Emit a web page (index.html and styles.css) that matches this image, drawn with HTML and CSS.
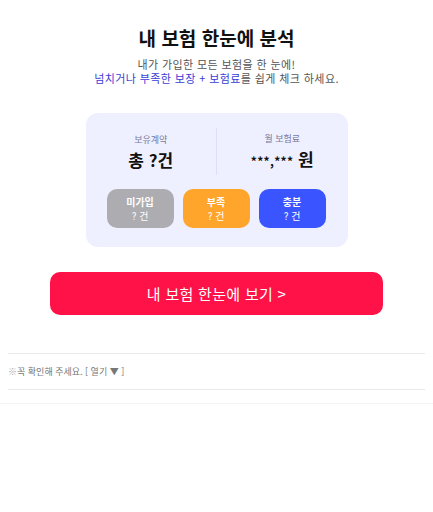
FILE: index.html
```html
<!DOCTYPE html>
<html lang="ko">
<head>
<meta charset="utf-8">
<link rel="stylesheet" href="styles.css">
</head>
<body>
<div class="page">
  <section class="hero">
    <h1 class="title">내 보험 한눈에 분석</h1>
    <p class="sub">내가 가입한 모든 보험을 한 눈에!<br><span class="blue">넘치거나 부족한 보장 + 보험료</span>를 쉽게 체크 하세요.</p>
    <div class="card">
      <div class="stats">
        <div class="stat">
          <div class="label">보유계약</div>
          <div class="value">총 ?건</div>
        </div>
        <div class="divider"></div>
        <div class="stat">
          <div class="label">월 보험료</div>
          <div class="value"><span class="stars">***,***</span> 원</div>
        </div>
      </div>
      <div class="chips">
        <div class="chip gray"><b>미가입</b><span>? 건</span></div>
        <div class="chip orange"><b>부족</b><span>? 건</span></div>
        <div class="chip blue-bg"><b>충분</b><span>? 건</span></div>
      </div>
    </div>
    <button class="cta">내 보험 한눈에 보기 &gt;</button>
  </section>
  <div class="notice">
    <span class="mark">※</span>꼭 확인해 주세요. [ 열기 ▼ ]
  </div>
</div>
<div class="foot-line"></div>
</body>
</html>
```
FILE: styles.css
```css
html, body {
  margin: 0;
  padding: 0;
  background: #fff;
}
body {
  font-family: "Noto Sans CJK KR", "Noto Sans", sans-serif;
  color: #111;
}
.page {
  padding: 0 8px;
}
.hero {
  display: flex;
  flex-direction: column;
  align-items: center;
  padding-top: 24px;
}
.title {
  margin: 0;
  font-size: 19px;
  font-weight: 700;
  line-height: 28px;
  color: #111;
}
.sub {
  margin: 5px 0 0;
  font-size: 11px;
  line-height: 14px;
  letter-spacing: 0.4px;
  color: #555;
  text-align: center;
}
.blue { color: #3b3bd6; }
.card {
  margin-top: 28px;
  width: 262px;
  height: 134px;
  box-sizing: border-box;
  background: #eff0ff;
  border-radius: 12px;
  padding-top: 15px;
}
.stats {
  display: flex;
  align-items: center;
  height: 47px;
}
.stat {
  flex: 1;
  display: flex;
  flex-direction: column;
  align-items: center;
}
.divider {
  width: 1px;
  align-self: stretch;
  background: #dcdff8;
}
.label {
  font-size: 9px;
  line-height: 14px;
  color: #767a9e;
}
.value {
  margin-top: 2px;
  font-size: 17px;
  line-height: 22px;
  font-weight: 700;
  color: #111;
}
.stars {
  font-size: 12px;
  letter-spacing: 0.3px;
}
.chips {
  display: flex;
  gap: 9px;
  margin-top: 14px;
  padding: 0 21px;
}
.chip {
  width: 67px;
  height: 39px;
  border-radius: 10px;
  display: flex;
  flex-direction: column;
  align-items: center;
  justify-content: center;
  color: #fff;
  font-size: 10px;
  line-height: 14px;
}
.chip b { font-weight: 700; }
.gray { background: #adadb1; }
.orange { background: #ffa52c; }
.blue-bg { background: #3a55ff; }
.cta {
  margin-top: 25px;
  width: 333px;
  height: 43px;
  border: none;
  border-radius: 10px;
  background: #ff1247;
  color: #fff;
  font-family: inherit;
  font-size: 15px;
  font-weight: 400;
  letter-spacing: 0.3px;
}
.notice {
  margin-top: 38px;
  border-top: 1px solid #e9e9e9;
  border-bottom: 1px solid #e9e9e9;
  height: 35px;
  display: flex;
  align-items: center;
  font-size: 9px;
  color: #777;
}
.mark { color: #aaa; }
.foot-line {
  margin-top: 13px;
  height: 1px;
  background: #f4f4f4;
}
```
